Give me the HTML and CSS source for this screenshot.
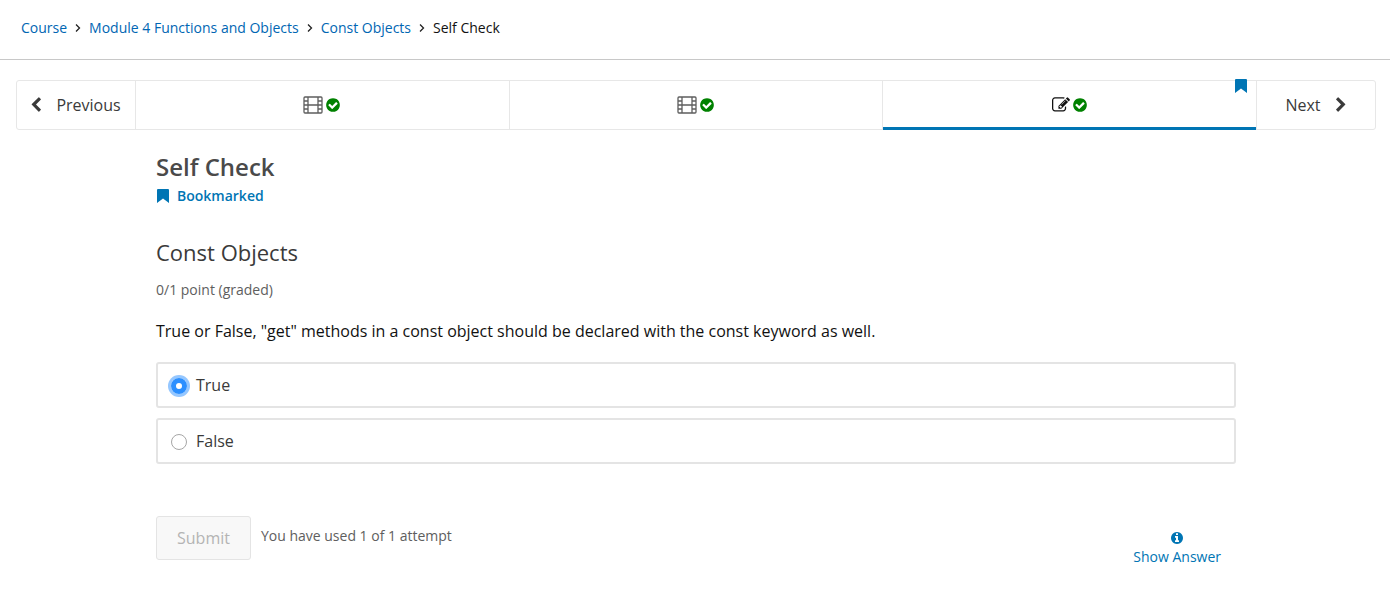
FILE: index.html
```html
<!DOCTYPE html>
<html lang="en">
<head>
<meta charset="utf-8">
<title>Self Check</title>
<link rel="stylesheet" href="styles.css">
</head>
<body>
<svg class="sprite" aria-hidden="true">
  <symbol id="check" viewBox="0 0 1792 1792"><path d="M1412 734q0-28-18-46l-91-90q-19-19-45-19t-45 19l-408 407-226-226q-19-19-45-19t-45 19l-91 90q-18 18-18 46 0 27 18 45l362 362q19 19 45 19 27 0 46-19l543-543q18-18 18-45zm252 162q0 209-103 385.500t-279.500 279.500-385.500 103-385.500-103-279.500-279.500-103-385.500 103-385.500 279.500-279.500 385.500-103 385.500 103 279.500 279.500 103 385.500z"/></symbol>
  <symbol id="film" viewBox="0 0 20 18"><g fill="none" stroke="currentColor" stroke-width="1.300"><rect x="1" y="1" width="18" height="16" rx="1"/><path d="M5 1v16M15 1v16M5 9h10M1 5h4M1 9h4M1 13h4M15 5h4M15 9h4M15 13h4"/></g></symbol>
  <symbol id="bookmark" viewBox="0 0 12 14"><path d="M0 1q0-1 1-1h10q1 0 1 1v13L6 9.500 0 14z"/></symbol>
</svg>

<nav class="breadcrumbs" aria-label="Course">
  <a href="#">Course</a>
  <svg class="crumb-sep" viewBox="0 0 6 8"><path d="M1 0.500L4.500 4 1 7.500"/></svg>
  <a href="#">Module 4 Functions and Objects</a>
  <svg class="crumb-sep" viewBox="0 0 6 8"><path d="M1 0.500L4.500 4 1 7.500"/></svg>
  <a href="#">Const Objects</a>
  <svg class="crumb-sep" viewBox="0 0 6 8"><path d="M1 0.500L4.500 4 1 7.500"/></svg>
  <span>Self Check</span>
</nav>

<main class="course">
  <nav class="sequence" aria-label="Sequence">
    <button class="step previous" type="button">
      <svg class="icon" viewBox="0 0 1792 1792"><path d="M1427 301l-531 531 531 531q19 19 19 45t-19 45l-166 166q-19 19-45 19t-45-19l-742-742q-19-19-19-45t19-45l742-742q19-19 45-19t45 19l166 166q19 19 19 45t-19 45z"/></svg>
      <span>Previous</span>
    </button>
    <button class="tab" type="button" aria-label="Video, completed">
      <svg class="film"><use href="#film"/></svg>
      <svg class="icon done"><use href="#check"/></svg>
    </button>
    <button class="tab" type="button" aria-label="Video, completed">
      <svg class="film"><use href="#film"/></svg>
      <svg class="icon done"><use href="#check"/></svg>
    </button>
    <button class="tab active" type="button" aria-label="Self Check, completed, bookmarked">
      <svg class="edit" viewBox="0 0 1792 1792"><path d="M888 1184l116-116-152-152-116 116v56h96v96h56zm440-720q-16-16-33 1l-350 350q-17 17-1 33t33-1l350-350q17-17 1-33zm80 594v190q0 119-84.500 203.500t-203.500 84.500h-832q-119 0-203.500-84.500t-84.500-203.500v-832q0-119 84.500-203.500t203.500-84.500h832q63 0 117 25 15 7 18 23 3 17-9 29l-49 49q-14 14-32 8-23-6-45-6h-832q-66 0-113 47t-47 113v832q0 66 47 113t113 47h832q66 0 113-47t47-113v-126q0-13 9-22l64-64q15-15 35-7t20 29zm-96-738l288 288-672 672h-288v-288zm444 132l-92 92-288-288 92-92q28-28 68-28t68 28l152 152q28 28 28 68t-28 68z"/></svg>
      <svg class="icon done"><use href="#check"/></svg>
      <svg class="bookmark tab-mark"><use href="#bookmark"/></svg>
    </button>
    <button class="step next" type="button">
      <span>Next</span>
      <svg class="icon" viewBox="0 0 1792 1792"><path d="M1363 877l-742 742q-19 19-45 19t-45-19l-166-166q-19-19-19-45t19-45l531-531-531-531q-19-19-19-45t19-45l166-166q19-19 45-19t45 19l742 742q19 19 19 45t-19 45z"/></svg>
    </button>
  </nav>

  <section class="unit">
    <h1>Self Check</h1>
    <button class="bookmark-toggle" type="button"><svg class="bookmark"><use href="#bookmark"/></svg>Bookmarked</button>
    <h2>Const Objects</h2>
    <p class="points">0/1 point (graded)</p>
    <form class="problem">
      <p class="question" id="question">True or False, "get" methods in a const object should be declared with the const keyword as well.</p>
      <div class="choices" role="radiogroup" aria-labelledby="question">
        <label class="choice"><input type="radio" name="answer" checked>True</label>
        <label class="choice"><input type="radio" name="answer">False</label>
      </div>
      <div class="actions">
        <button class="submit" type="button" disabled>Submit</button>
        <p class="attempts">You have used 1 of 1 attempt</p>
        <button class="show-answer" type="button">
          <svg class="info" viewBox="0 0 1792 1792"><path d="M1152 1376v-160q0-14-9-23t-23-9h-96v-512q0-14-9-23t-23-9h-320q-14 0-23 9t-9 23v160q0 14 9 23t23 9h96v320h-96q-14 0-23 9t-9 23v160q0 14 9 23t23 9h448q14 0 23-9t9-23zm-128-896v-160q0-14-9-23t-23-9h-192q-14 0-23 9t-9 23v160q0 14 9 23t23 9h192q14 0 23-9t9-23zm640 416q0 209-103 385.500t-279.500 279.500-385.500 103-385.500-103-279.500-279.500-103-385.500 103-385.500 279.500-279.500 385.500-103 385.500 103 279.500 279.500 103 385.500z"/></svg>
          Show Answer
        </button>
      </div>
    </form>
  </section>
</main>
</body>
</html>
```
FILE: styles.css
```css
* { box-sizing: border-box; }
body {
  margin: 0;
  background: #fff;
  color: #3a3a3a;
  font: 16px/24px "Open Sans", sans-serif;
}
button {
  padding: 0;
  border: 0;
  background: none;
  color: inherit;
  font: inherit;
}
h1, h2, p { margin: 0; }
svg { flex: none; fill: currentColor; }
.sprite { position: absolute; width: 0; height: 0; }

.breadcrumbs {
  display: flex;
  align-items: center;
  gap: 8px;
  height: 60px;
  padding: 0 21px 4px;
  border-bottom: 1px solid #c8c8c8;
  color: #111;
  font-size: 14px;
}
.breadcrumbs a { color: #0066b3; text-decoration: none; }
.crumb-sep {
  width: 6px;
  height: 8px;
  fill: none;
  stroke: #222;
  stroke-width: 1.3;
}

.course { padding: 20px 14px 40px 16px; }
.sequence {
  display: flex;
  height: 50px;
  border: 1px solid #e7e7e7;
  border-radius: 3px;
}
.step {
  display: flex;
  align-items: center;
  justify-content: center;
  gap: 12px;
  width: 118px;
}
.previous { padding-right: 3px; }
.next {
  width: 119px;
  padding-left: 2px;
  border-left: 1px solid #e7e7e7;
}
.tab {
  position: relative;
  display: flex;
  flex: 1;
  align-items: center;
  justify-content: center;
  gap: 2px;
  border-left: 1px solid #e7e7e7;
}
.tab.active { color: #111; }
.tab.active::after {
  content: "";
  position: absolute;
  right: 0;
  bottom: -1px;
  left: 0;
  height: 3px;
  background: #0075b4;
}
.icon { width: 16px; height: 16px; }
.done { color: #008100; }
.film { width: 20px; height: 18px; color: #5e5e5e; }
.edit { width: 18px; height: 18px; }
.bookmark { width: 12px; height: 14px; color: #0075b4; }
.tab-mark { position: absolute; top: -2px; right: 9px; }

.unit { max-width: 1080px; margin: 0 auto; padding-top: 20px; }
h1 { font-size: 24px; font-weight: 600; line-height: 34px; color: #4a4a4a; }
.bookmark-toggle {
  display: flex;
  align-items: center;
  gap: 8px;
  padding-left: 1px;
  color: #0075b4;
  font-size: 14px;
  font-weight: 600;
}
h2 { margin-top: 29px; font-size: 22px; font-weight: 400; line-height: 30px; color: #3a3a3a; }
.points { margin-top: 11px; color: #5e5e5e; font-size: 14px; }
.question { margin-top: 17px; color: #111; }
.choices { display: grid; gap: 10px; margin-top: 19px; }
.choice {
  display: flex;
  align-items: center;
  gap: 9px;
  height: 46px;
  padding: 0 13px;
  border: 2px solid #e4e4e4;
  border-radius: 3px;
}
.choice input {
  appearance: none;
  width: 16px;
  height: 16px;
  margin: 2px 0 0;
  border: 1px solid #a6a6a6;
  border-radius: 50%;
}
.choice input:checked {
  border: 5px solid #2b8fff;
  box-shadow: 0 0 0 3px #95c7ff;
}
.actions { display: flex; margin-top: 52px; }
.submit {
  height: 44px;
  padding: 0 20px;
  border: 1px solid #e4e4e4;
  border-radius: 3px;
  background: #f8f8f8;
  color: #b4b4b4;
}
.attempts { margin: 8px 0 0 10px; color: #5e5e5e; font-size: 14px; }
.show-answer {
  display: flex;
  flex-direction: column;
  align-items: center;
  gap: 2px;
  margin: 15px 15px 0 auto;
  color: #0075b4;
  font-size: 14px;
  line-height: 20px;
}
.info { width: 14px; height: 14px; }
```
